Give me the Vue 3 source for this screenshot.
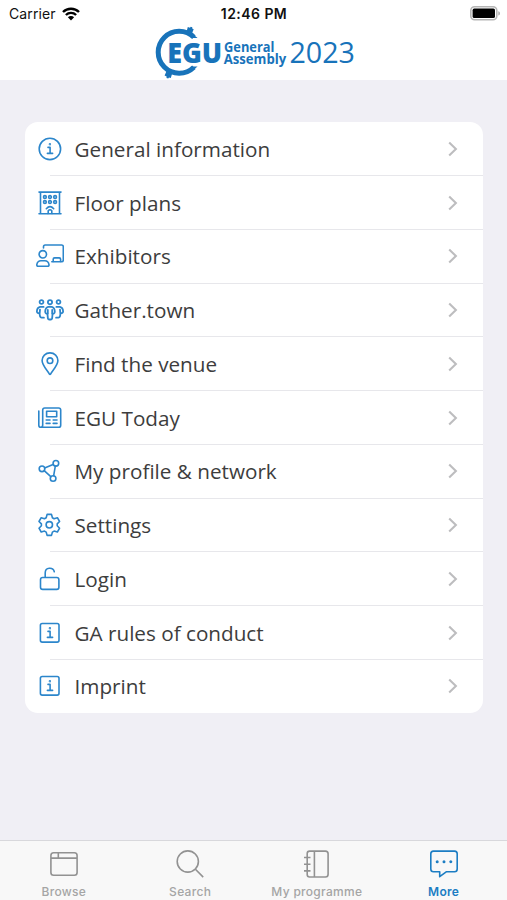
<template>
  <div class="screen">
    <header class="header">
      <div class="status">
        <div class="carrier">
          <span>Carrier</span>
          <svg class="wifi" viewBox="0 0 18 14">
            <path d="M1 5a11.3 11.3 0 0 1 16 0M3.9 8a7.2 7.2 0 0 1 10.2 0" />
            <path class="solid" d="M9 13.4L5.9 10.3a4.4 4.4 0 0 1 6.2 0z" />
          </svg>
        </div>
        <div class="clock">12:46 PM</div>
        <div class="power">
          <svg class="battery" viewBox="0 0 31 15">
            <rect class="shell" x=".8" y=".8" width="26" height="13" rx="3.8" />
            <rect class="charge" x="2.6" y="2.6" width="22.4" height="9.4" rx="1.6" />
            <path class="nub" d="M28.3 5.2c2.2.6 2.2 3.8 0 4.4z" />
          </svg>
        </div>
      </div>
      <svg class="logo" viewBox="0 0 204 54">
        <path class="ring" d="M38.9 11.3A21 21 0 1 0 38.9 41.3" />
        <path class="knob" d="M42.6 11.9h-6.8l1.5-4.2zM42.6 40.6h-6.8l1.5 4.2z" />
        <path class="knob" d="M31.6 5.6l1.2-4.6 2.2.8.7-1.1 1.6.5-.1 1.4 1.5.7-2.2 5.1zM11.4 45.6l5.6 2.4-1.2 3.9-1.8-.4-.8 1.1-1.7-.5.1-1.6-2-.9z" />
        <text class="egu" x="12.2" y="36.7" textLength="55" lengthAdjust="spacingAndGlyphs">EGU</text>
        <text class="ga" x="69" y="26" textLength="50.4" lengthAdjust="spacingAndGlyphs">General</text>
        <text class="ga" x="68.8" y="37.6" textLength="62.4" lengthAdjust="spacingAndGlyphs">Assembly</text>
        <text class="year" x="134.5" y="37.4" textLength="65.5" lengthAdjust="spacingAndGlyphs">2023</text>
      </svg>
    </header>

    <main class="content">
      <ul class="menu">
        <li v-for="item in items" :key="item.label" class="row">
          <svg class="icon" :class="item.icon" viewBox="0 0 28 28">
            <path v-for="(d, i) in icons[item.icon]" :key="i" :d="d" />
          </svg>
          <div class="line">
            <span class="label">{{ item.label }}</span>
            <svg class="chevron" viewBox="0 0 10 16"><path d="M1.2 1.4L7.9 8l-6.7 6.6" /></svg>
          </div>
        </li>
      </ul>
    </main>

    <nav class="tabs">
      <a v-for="tab in tabs" :key="tab.label" class="tab" :class="{ active: tab.label === current }" @click="current = tab.label">
        <svg class="tab-icon" viewBox="0 0 30 30">
          <path v-for="(d, i) in tab.paths" :key="i" :d="d" />
        </svg>
        <span class="tab-label">{{ tab.label }}</span>
      </a>
    </nav>
  </div>
</template>

<script setup>
import { ref } from 'vue'

const current = ref('More')

const items = [
  { label: 'General information', icon: 'info' },
  { label: 'Floor plans', icon: 'building' },
  { label: 'Exhibitors', icon: 'exhibitor' },
  { label: 'Gather.town', icon: 'people' },
  { label: 'Find the venue', icon: 'pin' },
  { label: 'EGU Today', icon: 'news' },
  { label: 'My profile & network', icon: 'network' },
  { label: 'Settings', icon: 'gear' },
  { label: 'Login', icon: 'lock' },
  { label: 'GA rules of conduct', icon: 'info-square' },
  { label: 'Imprint', icon: 'info-square' }
]

// circle as a path, so every icon is a plain list of paths
function circle(x, y, r) {
  return `M${x - r} ${y}a${r} ${r} 0 1 0 ${2 * r} 0a${r} ${r} 0 1 0 ${-2 * r} 0z`
}

const letterI = ['M12 12.4h2.1v5.9M11.4 18.4h5.2', circle(13.9, 9.2, 0.4)]

const icons = {
  info: [circle(13.9, 13.9, 10.7), ...letterI],
  building: [
    'M3 3.1h22M4.5 3.5v21M23.5 3.5v21M3 24.8h8.7M16.3 24.8H25',
    circle(8.9, 8, 1.4), circle(14, 8, 1.4), circle(19.1, 8, 1.4),
    circle(8.9, 13, 1.4), circle(14, 13, 1.4), circle(19.1, 13, 1.4),
    'M10.3 19.7q3.7-4.2 7.4 0M12.2 24.8v-3.1q1.8-2 3.6 0v3.1z'
  ],
  exhibitor: [
    'M7.5 6V4.7q0-1.7 1.7-1.7h16.5q1.6 0 1.6 1.7v13.4q0 1.7-1.7 1.7H15.8',
    'M17.2 19.5v-2.2q0-1.4 1.4-1.4h4.6q1.4 0 1.4 1.4v2.2',
    circle(6.8, 12.3, 3.7),
    'M.8 22.6q.7-3.9 4.1-3.9h4q3.4 0 4.1 3.9.2 1.7-1.5 1.7H2.3q-1.7 0-1.5-1.7z'
  ],
  people: [
    circle(5.5, 6, 1.9), circle(14, 6.2, 2.1), circle(22.5, 6, 1.9),
    'M12.2 10.9h3.6c2 .5 3 2.7 3 5.1-.2 1.5-1.4 1.8-2.2 1.5l-.5 5q-.3 1-1.3 1h-1.6q-1 0-1.3-1l-.5-5c-.8.3-2 0-2.2-1.5 0-2.4 1-4.6 3-5.1z',
    'M11.8 13.8v3.8M16.2 13.8v3.8',
    'M7.6 10.9H4.1C2 11.4.9 13.8.9 15.6c.2 1.4 1.4 1.8 2.4 1.4M4 13.6l-.4 4.5.5 2.5q.3 1.1 1.5 1.1h2.3',
    'M20.4 10.9h3.5c2.1.5 3.2 2.9 3.2 4.7-.2 1.4-1.4 1.8-2.4 1.4M24 13.6l.4 4.5-.5 2.5q-.3 1.1-1.5 1.1h-2.3'
  ],
  pin: ['M14 2.9c-4.5 0-7.9 3.4-7.9 7.7 0 4.8 5.1 9.6 7.2 13.3q.7.9 1.4 0c2.1-3.7 7.2-8.5 7.2-13.3 0-4.3-3.4-7.7-7.9-7.7z', circle(14, 10.7, 2.8)],
  news: [
    'M8.8 4h13.8q2.1 0 2.1 2.1v15.1q0 2.1-2.1 2.1H5q-2.2 0-2.2-2.1V7.1M6.7 21.1V6.1Q6.7 4 8.8 4M6.7 21.1q0 2.1-1.8 2.1',
    'M10.6 7.3h10.1v5.4H10.6z',
    'M10.2 16h3.8M17.2 16H21M10.2 19.4h3.8M17.2 19.4H21'
  ],
  network: [circle(6, 11.8, 2.8), circle(19.9, 6.3, 2.8), circle(17.1, 21.5, 2.8), 'M8.6 10.9l8.5-3.4M19.3 9.2L17.7 18.6M8.2 13.7l6.6 5.9'],
  gear: [
    'M11.1 3.4h4.4l.9 3.3 1.7 1 3.3-1 2.2 3.8-2.4 2.4v1.9l2.4 2.4-2.2 3.8-3.3-.9-1.7 1-.9 3.3h-4.4l-.9-3.3-1.7-1-3.3.9L3 17.2l2.4-2.4v-1.9L3 10.5l2.2-3.8 3.3 1 1.7-1z',
    circle(13.3, 13.8, 3.2)
  ],
  lock: ['M6.7 12.5h14q2.2 0 2.2 2.2v7.5q0 2.2-2.2 2.2h-14q-2.2 0-2.2-2.2v-7.5q0-2.2 2.2-2.2z', 'M9.2 12.2V8c0-6.1 7.9-6.1 9.1-1.3'],
  'info-square': ['M6.2 4.5h15q1.8 0 1.8 1.8v15q0 1.8-1.8 1.8h-15q-1.8 0-1.8-1.8v-15q0-1.8 1.8-1.8z', ...letterI]
}

const tabs = [
  { label: 'Browse', paths: ['M4.6 3.8h20.8q2.7 0 2.7 2.7v17q0 2.7-2.7 2.7H4.6q-2.7 0-2.7-2.7v-17q0-2.7 2.7-2.7zM2 9.1h26M9.3 4v5'] },
  { label: 'Search', paths: [circle(12.8, 12.5, 10.6), 'M20.4 20.2l7.8 7.9'] },
  { label: 'My programme', paths: ['M7.6 2.1h15.8q2.7 0 2.7 2.7v20.5q0 2.7-2.7 2.7H7.6q-2.4 0-2.4-2.4V4.5q0-2.4 2.4-2.4zM12.4 2.2v25.7M2 8.5h6.5M2 15.2h6.5M2 21.9h6.5'] },
  { label: 'More', paths: ['M4.5 2.1h21q2.7 0 2.7 2.7v15.3q0 2.7-2.7 2.7h-8.3l-6.5 4.9v-4.9H4.5q-2.7 0-2.7-2.7V4.8q0-2.7 2.7-2.7z', circle(8.2, 12.7, 0.7), circle(15, 12.7, 0.7), circle(21.8, 12.7, 0.7)] }
]
</script>

<style>
body {
  margin: 0;
  background: #f0eff5;
}
</style>

<style scoped>
.screen {
  height: 900px;
  display: flex;
  flex-direction: column;
  background: #f0eff5;
  font-family: "Open Sans", sans-serif;
}

/* Header */
.header {
  height: 80px;
  box-sizing: border-box;
  display: flex;
  flex-direction: column;
  background: #fff;
}

.status {
  height: 26px;
  display: grid;
  grid-template-columns: 1fr auto 1fr;
  align-items: center;
  padding: 1px 8px 0 9px;
  box-sizing: border-box;
  color: #111;
  font-family: Inter, sans-serif;
  font-size: 14px;
}

.carrier {
  display: flex;
  align-items: center;
  gap: 6px;
  letter-spacing: 0.1px;
}

.wifi { width: 18px; height: 14px; }
.wifi path { fill: none; stroke: #000; stroke-width: 2.4; }
.wifi .solid { fill: #000; stroke: none; }

.clock { font-weight: 600; letter-spacing: 0.45px; }

.power {
  display: flex;
  justify-content: flex-end;
}
.battery { width: 31px; height: 15px; margin-right: -2px; }
.shell { fill: #fff; stroke: #b5b5b5; stroke-width: 1.6; }
.charge { fill: #000; }
.nub { fill: #aaa; }

.logo {
  width: 204px;
  height: 54px;
  margin-left: 155px;
}
.ring { fill: none; stroke: #1873ba; stroke-width: 5; }
.knob { fill: #1873ba; }
.logo text { fill: #1873ba; }
.egu { font-size: 27.5px; font-weight: 800; }
.ga { font-size: 13.4px; font-weight: 700; }
.year { font-size: 29.5px; }

/* Menu card */
.content {
  flex: 1;
  padding: 42px 24px 0 25px;
}

.menu {
  margin: 0;
  padding: 0;
  list-style: none;
  background: #fff;
  border-radius: 13px;
  overflow: hidden;
}

.row {
  height: 53.75px;
  display: grid;
  grid-template-columns: 28px 1fr;
  align-items: center;
  padding-left: 11px;
}

/* hairline starts under the middle of the icon */
.row:not(:last-child) {
  background: linear-gradient(#e7e7eb, #e7e7eb) 25px 53px / 100% 1px no-repeat;
}

.icon { width: 28px; height: 28px; }
.icon path {
  fill: none;
  stroke: #2c86cb;
  stroke-width: 1.6;
  stroke-linejoin: round;
  stroke-linecap: round;
}
.icon.people path { stroke-width: 1.8; }

.line {
  display: flex;
  align-items: center;
  justify-content: space-between;
  padding: 0 25px 0 10.5px;
}

.label {
  font-size: 20.7px;
  line-height: 28px;
  color: #3d3d3d;
}

.chevron { width: 10px; height: 16px; }
.chevron path { fill: none; stroke: #bdbdbf; stroke-width: 2.1; }

/* Bottom tabs */
.tabs {
  height: 60px;
  box-sizing: border-box;
  display: grid;
  grid-template-columns: repeat(4, 1fr);
  border-top: 1px solid #d8d8dc;
  background: #f8f8f8;
}

.tab {
  display: flex;
  flex-direction: column;
  align-items: center;
  padding-top: 8px;
  color: #929292;
  cursor: pointer;
}
.tab:first-child { padding-left: 1px; }

.tab-icon { width: 30px; height: 30px; }
.tab-icon path {
  fill: none;
  stroke: currentColor;
  stroke-width: 1.6;
  stroke-linejoin: round;
}

.tab-label {
  margin-top: 4px;
  font-family: Inter, sans-serif;
  font-size: 12px;
  line-height: 17px;
  font-weight: 500;
  letter-spacing: 0.3px;
  color: #a5a5a5;
}

.tab.active,
.tab.active .tab-label { color: #1c7dc3; }
.tab.active .tab-label { font-weight: 600; }
</style>
